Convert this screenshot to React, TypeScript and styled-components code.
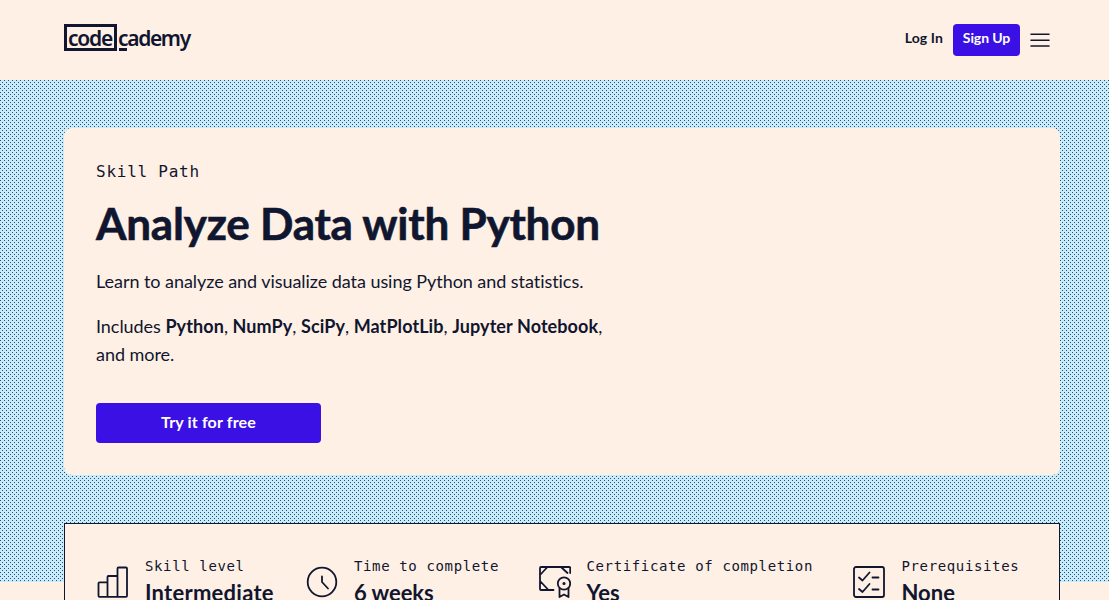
import React from 'react';
import styled, { createGlobalStyle } from 'styled-components';

const navy = '#10162f';
const beige = '#fff0e5';
const hyper = '#3a10e5';
const sans = "Lato, 'Liberation Sans', sans-serif";
const mono = "'DejaVu Sans Mono', 'Liberation Mono', monospace";

const GlobalStyle = createGlobalStyle`
  *, *::before, *::after { box-sizing: border-box; }
  html, body { margin: 0; height: 600px; overflow: hidden; }
  body { background: ${beige}; color: ${navy}; font-family: ${sans}; font-variant-ligatures: none; }
  h1, p { margin: 0; }
`;

const Page = styled.div`
  height: 600px;
  overflow: hidden;
`;

const Header = styled.header`
  height: 80px;
  padding: 0 57px 0 64px;
  display: flex;
  align-items: flex-start;
  justify-content: space-between;
`;

const Logo = styled.a`
  display: flex;
  margin-top: 24px;
  font: 600 21px/24px 'Noto Sans', sans-serif;
  color: ${navy};
`;

const LogoBox = styled.span`
  width: 53px;
  height: 27px;
  border: 3px solid ${navy};
  padding-left: 1px;
  line-height: 22px;
  letter-spacing: -1.2px;
`;

const LogoRest = styled.span`
  position: relative;
  padding-left: 1px;
  line-height: 28px;
  letter-spacing: -1.35px;
  &::after {
    content: '';
    position: absolute;
    left: 2px;
    top: 24px;
    width: 8px;
    height: 3px;
    background: ${navy};
  }
`;

const Nav = styled.nav`
  display: flex;
  align-items: center;
  margin-top: 24px;
  height: 32px;
`;

const LogIn = styled.a`
  font-size: 14px;
  font-weight: 700;
  line-height: 28px;
  height: 32px;
  margin-right: 10px;
  letter-spacing: 0.1px;
`;

const SignUp = styled.button`
  width: 67px;
  height: 32px;
  padding: 0 0 4px;
  border: 0;
  border-radius: 4px;
  background: ${hyper};
  color: #fff;
  font: 700 14px/20px ${sans};
  letter-spacing: -0.1px;
  margin-right: 8px;
`;

const Hero = styled.section`
  height: 502px;
  padding: 48px 49px 0 64px;
  background-color: #c9ebfa;
  background-image: conic-gradient(from 270deg at 1px 1px, #1c5579 90deg, transparent 0),
    conic-gradient(from 270deg at 1px 1px, #1c5579 90deg, transparent 0);
  background-size: 4px 4px;
  background-position: 0 0, 2px 2px;
`;

const Card = styled.div`
  height: 347px;
  margin-bottom: 48px;
  padding: 32px;
  border-radius: 8px;
  background: ${beige};
`;

const Eyebrow = styled.p`
  font: 16px/24px ${mono};
  letter-spacing: 0.75px;
`;

const Title = styled.h1`
  margin-top: 11px;
  font-size: 44px;
  line-height: 56px;
  font-weight: 700;
  letter-spacing: -0.23px;
  -webkit-text-stroke: 0.6px ${navy};
  white-space: nowrap;
`;

const Copy = styled.p<{ $gap: number }>`
  margin-top: ${(p) => p.$gap}px;
  font-size: 18px;
  line-height: 28px;
  letter-spacing: -0.05px;
  white-space: nowrap;
  b { letter-spacing: 0.09px; }
`;

const TryButton = styled.button`
  display: block;
  width: 225px;
  height: 40px;
  margin-top: 35px;
  padding: 0 0 2px;
  border: 0;
  border-radius: 4px;
  background: ${hyper};
  color: #fff;
  font: 700 16px/24px ${sans};
  letter-spacing: 0.15px;
`;

const Facts = styled.div`
  display: grid;
  grid-template-columns: 209px 232.5px 314px 1fr;
  height: 120px;
  padding: 32px 0 0 32px;
  border: 1px solid ${navy};
  background: ${beige};
`;

const Fact = styled.div`
  display: flex;
  svg { flex: none; margin-top: 10px; }
  &:last-child > div { margin-left: 17px; }
`;

const FactText = styled.div`
  margin-left: 16px;
  white-space: nowrap;
`;

const FactLabel = styled.div`
  font: 14px/21px ${mono};
  letter-spacing: 0.63px;
`;

const FactValue = styled.div<{ $spacing: number }>`
  font-size: 22px;
  line-height: 32px;
  font-weight: 700;
  letter-spacing: ${(p) => p.$spacing}px;
`;

const Glyph = ({ children }: { children: React.ReactNode }) => (
  <svg width="32" height="32" viewBox="0 0 32 32" fill="none" stroke={navy} strokeWidth="1.8" strokeLinejoin="round" strokeLinecap="round">
    {children}
  </svg>
);

const BarsIcon = () => (
  <Glyph>
    <path d="M1.500 29.800V17.300q0-1 1-1h8v14.500H2.500q-1 0-1-1zM10.500 30.800V11q0-1 1-1h9v20.800zM20.500 30.800V2.500q0-1 1-1h7.500q1 0 1 1v27.300q0 1-1 1z" />
  </Glyph>
);

const ClockIcon = () => (
  <Glyph>
    <circle cx="16" cy="16" r="14.3" />
    <path d="M16 10.500V16l6 6.500" />
  </Glyph>
);

const CertificateIcon = () => (
  <Glyph>
    <path d="M14.500 24H2q-1 0-1-1V2q0-1 1-1H30q1.200 0 1.200 1V7M1.500 8.500L8 1.500M1.500 15.500L9 23.500M22.500 1.500L28.500 7" />
    <circle cx="25" cy="17.500" r="6.200" />
    <circle cx="25" cy="17.500" r=".7" fill={navy} />
    <path d="M20.500 22.500V31l4.500-2.500 4.500 2.500V22.500" />
  </Glyph>
);

const ChecklistIcon = () => (
  <Glyph>
    <rect x="1" y="1" width="30" height="30" rx="2" />
    <path d="M6 11.500l3.500 3 7-8M6 23l3.500 3 7-8M19.500 11.500h6M19.500 23.500h6" />
  </Glyph>
);

const facts = [
  { label: 'Skill level', value: 'Intermediate', spacing: 0.25, icon: <BarsIcon /> },
  { label: 'Time to complete', value: '6 weeks', spacing: -0.05, icon: <ClockIcon /> },
  { label: 'Certificate of completion', value: 'Yes', spacing: 0, icon: <CertificateIcon /> },
  { label: 'Prerequisites', value: 'None', spacing: 0, icon: <ChecklistIcon /> },
];

export default function App() {
  return (
    <Page>
      <GlobalStyle />
      <Header>
        <Logo>
          <LogoBox>code</LogoBox>
          <LogoRest>cademy</LogoRest>
        </Logo>
        <Nav>
          <LogIn>Log In</LogIn>
          <SignUp>Sign Up</SignUp>
          <svg width="24" height="24" viewBox="0 0 24 24" stroke={navy} strokeWidth="1.5" strokeLinecap="round">
            <path d="M3 6.200h18M3 12.200h18M3 18h18" />
          </svg>
        </Nav>
      </Header>
      <Hero>
        <Card>
          <Eyebrow>Skill Path</Eyebrow>
          <Title>Analyze Data with Python</Title>
          <Copy $gap={16}>Learn to analyze and visualize data using Python and statistics.</Copy>
          <Copy $gap={17}>
            Includes <b>Python</b>, <b>NumPy</b>, <b>SciPy</b>, <b>MatPlotLib</b>, <b>Jupyter Notebook</b>,<br />
            and more.
          </Copy>
          <TryButton>Try it for free</TryButton>
        </Card>
        <Facts>
          {facts.map((f) => (
            <Fact key={f.label}>
              {f.icon}
              <FactText>
                <FactLabel>{f.label}</FactLabel>
                <FactValue $spacing={f.spacing}>{f.value}</FactValue>
              </FactText>
            </Fact>
          ))}
        </Facts>
      </Hero>
    </Page>
  );
}
